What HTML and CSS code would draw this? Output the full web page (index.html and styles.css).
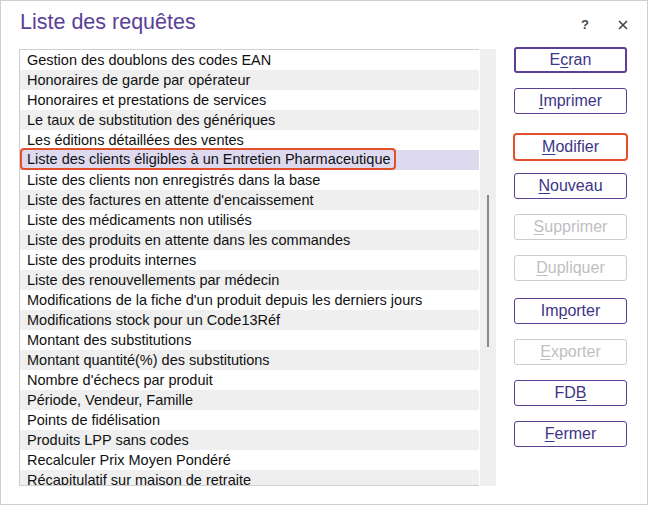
FILE: index.html
```html
<!DOCTYPE html>
<html lang="fr">
<head>
    <meta charset="UTF-8">
    <title>Liste des requêtes</title>
    <link rel="stylesheet" href="styles.css">
</head>
<body>
    <div class="window">
        <div class="titlebar">
            <h1 class="title">Liste des requêtes</h1>
            <span class="help">?</span>
            <svg class="close" width="10" height="10" viewBox="0 0 10 10">
                <path d="M1 1 L9 9 M9 1 L1 9" stroke="#444" stroke-width="1.6" fill="none"/>
            </svg>
        </div>

        <div class="content">
            <div class="list">
                <div class="rows">
                    <div class="row">Gestion des doublons des codes EAN</div>
                    <div class="row">Honoraires de garde par opérateur</div>
                    <div class="row">Honoraires et prestations de services</div>
                    <div class="row">Le taux de substitution des génériques</div>
                    <div class="row">Les éditions détaillées des ventes</div>
                    <div class="row selected"><span class="focus">Liste des clients éligibles à un Entretien Pharmaceutique</span></div>
                    <div class="row">Liste des clients non enregistrés dans la base</div>
                    <div class="row">Liste des factures en attente d'encaissement</div>
                    <div class="row">Liste des médicaments non utilisés</div>
                    <div class="row">Liste des produits en attente dans les commandes</div>
                    <div class="row">Liste des produits internes</div>
                    <div class="row">Liste des renouvellements par médecin</div>
                    <div class="row">Modifications de la fiche d'un produit depuis les derniers jours</div>
                    <div class="row">Modifications stock pour un Code13Réf</div>
                    <div class="row">Montant des substitutions</div>
                    <div class="row">Montant quantité(%) des substitutions</div>
                    <div class="row">Nombre d'échecs par produit</div>
                    <div class="row">Période, Vendeur, Famille</div>
                    <div class="row">Points de fidélisation</div>
                    <div class="row">Produits LPP sans codes</div>
                    <div class="row">Recalculer Prix Moyen Pondéré</div>
                    <div class="row">Récapitulatif sur maison de retraite</div>
                </div>
                <div class="scrollbar"><div class="thumb"></div></div>
            </div>

            <div class="actions">
                <button class="btn default">E<u>c</u>ran</button>
                <button class="btn"><u>I</u>mprimer</button>
                <button class="btn focused"><u>M</u>odifier</button>
                <button class="btn"><u>N</u>ouveau</button>
                <button class="btn" disabled><u>S</u>upprimer</button>
                <button class="btn" disabled><u>D</u>upliquer</button>
                <button class="btn spaced">Im<u>p</u>orter</button>
                <button class="btn" disabled><u>E</u>xporter</button>
                <button class="btn">FD<u>B</u></button>
                <button class="btn"><u>F</u>ermer</button>
            </div>
        </div>
    </div>
</body>
</html>
```

FILE: styles.css
```css
body {
    margin: 0;
    background: #fff;
    font-family: "Liberation Sans", Arial, sans-serif;
}
.window {
    width: 648px;
    height: 505px;
    box-sizing: border-box;
    border: 1px solid #cfcfcf;
    background: #fff;
}
.titlebar {
    height: 48px;
    display: flex;
    align-items: flex-start;
    padding: 9px 19px 0 19px;
    box-sizing: border-box;
}
.title {
    margin: 0;
    font-size: 21.5px;
    font-weight: normal;
    line-height: 25px;
    color: #5a3f98;
}
.help {
    margin-left: auto;
    margin-top: 8px;
    font-size: 13px;
    font-weight: bold;
    line-height: 14px;
    color: #444;
}
.close {
    margin-left: 29px;
    margin-top: 10px;
}
.content {
    display: flex;
    padding-left: 18px;
    gap: 18px;
}
/* Liste */
.list {
    display: flex;
    width: 477px;
    height: 437px;
}
.rows {
    width: 459px;
    border: 1px solid #cfcfcf;
    border-right: none;
    overflow: hidden;
    font-size: 14.5px;
    color: #111;
}
.row {
    height: 20px;
    line-height: 20px;
    padding-left: 7px;
    white-space: nowrap;
    display: flex;
    align-items: center;
}
.row:nth-child(even) {
    background: #efefef;
}
.row.selected {
    background: #dddaf0;
}
.focus {
    height: 22px;
    box-sizing: border-box;
    line-height: 18px;
    border: 2px solid #e4502b;
    border-radius: 4px;
    padding: 0 3px 0 5px;
    margin-left: -7px;
    position: relative;
    top: -1px;
}
.scrollbar {
    width: 16px;
    margin-left: 1px;
    background: #efefef;
    padding-top: 146px;
    box-sizing: border-box;
}
.thumb {
    width: 2px;
    height: 152px;
    margin-left: 7px;
    background: #8a8a8a;
}
/* Boutons */
.actions {
    display: flex;
    flex-direction: column;
    gap: 15px;
    margin-top: -2px;
}
.btn {
    width: 113px;
    height: 26px;
    padding: 0;
    background: #fff;
    border: 1px solid #5b3f94;
    border-radius: 3px;
    font-family: "Liberation Sans", Arial, sans-serif;
    font-size: 16px;
    color: #3d3585;
}
.btn u {
    text-underline-offset: 2px;
}
.btn.default {
    border-width: 2px;
}
.btn.focused {
    width: 115px;
    height: 28px;
    margin: 4px -1px -3px -1px;
    border: 2px solid #e4502b;
    border-radius: 4px;
}
.btn.spaced {
    margin-top: 2px;
}
.btn:disabled {
    border-color: #cccccc;
    color: #c0c0c0;
}
```
